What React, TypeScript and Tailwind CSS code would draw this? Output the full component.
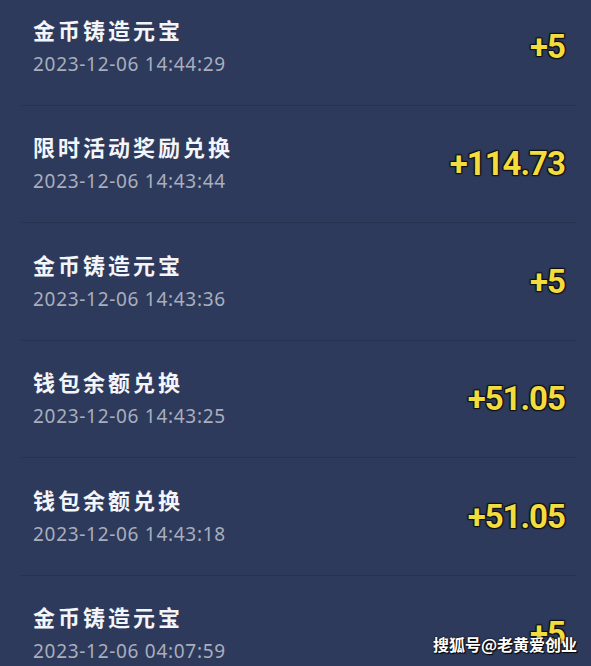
const records = [
  { title: '金币铸造元宝', time: '2023-12-06 14:44:29', amount: '+5' },
  { title: '限时活动奖励兑换', time: '2023-12-06 14:43:44', amount: '+114.73' },
  { title: '金币铸造元宝', time: '2023-12-06 14:43:36', amount: '+5' },
  { title: '钱包余额兑换', time: '2023-12-06 14:43:25', amount: '+51.05' },
  { title: '钱包余额兑换', time: '2023-12-06 14:43:18', amount: '+51.05' },
  { title: '金币铸造元宝', time: '2023-12-06 04:07:59', amount: '+5' },
];

function RecordRow({ title, time, amount }: { title: string; time: string; amount: string }) {
  return (
    <div className="ml-[21px] mr-[14px] h-[117.5px] border-b border-[#27324f] flex items-center justify-between pl-[12px] pr-[12px] shrink-0">
      <div className="flex flex-col gap-[5px]">
        <div className="h-[30px] leading-[30px] text-[22px] font-semibold tracking-[3px] text-[#f4f5f8] font-['Noto_Sans_CJK_SC',sans-serif]">
          {title}
        </div>
        <div className="h-[30px] leading-[30px] text-[19px] tracking-[0.7px] text-[#a9aebd] font-['Noto_Sans','Noto_Sans_CJK_SC',sans-serif]">
          {time}
        </div>
      </div>
      <div className="text-[33px] font-bold tracking-[-1px] text-[#f3dc3e] font-['Roboto',sans-serif] [text-shadow:0_0_1px_#111,1px_1px_1px_#111,-1px_-1px_1px_#111,1px_-1px_1px_#111,-1px_1px_1px_#111]">
        {amount}
      </div>
    </div>
  );
}

export default function App() {
  return (
    <div className="relative w-[591px] h-[666px] overflow-hidden bg-[#2d3a5c]">
      <div className="flex flex-col -mt-[12px]">
        {records.map((r, i) => (
          <RecordRow key={i} {...r} />
        ))}
      </div>
      <div className="absolute right-[14px] bottom-[10px] text-[16px] font-bold text-white font-['Noto_Sans_CJK_SC',sans-serif] [text-shadow:1px_1px_1px_#000,0_0_2px_#000]">
        搜狐号@老黄爱创业
      </div>
    </div>
  );
}
